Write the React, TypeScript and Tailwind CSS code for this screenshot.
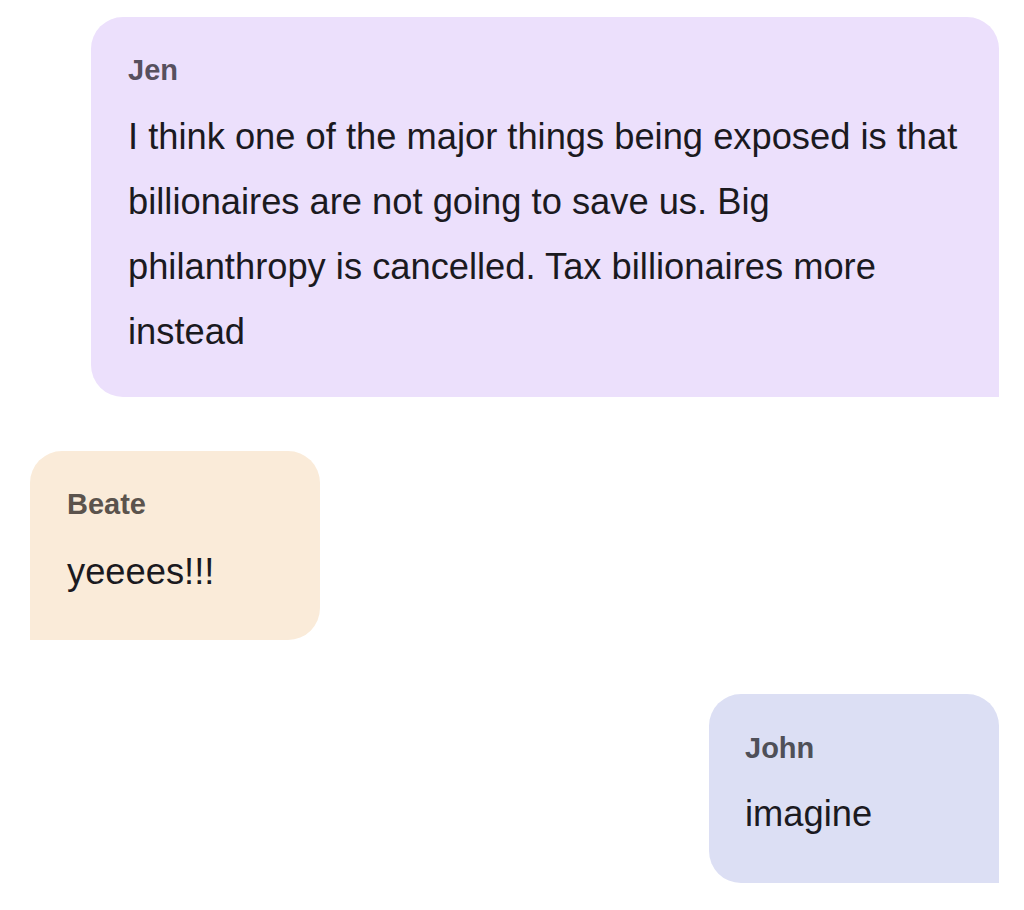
import React from "react";

export default function App() {
  return (
    <div
      className="w-[1024px] h-[910px] bg-white overflow-hidden flex flex-col pt-[17px] gap-[54px]"
      style={{ fontFamily: '"Liberation Sans", Arial, sans-serif' }}
    >
      <div className="flex justify-end pr-[25px]">
        <div className="w-[908px] bg-[#ece0fc] rounded-tl-[32px] rounded-tr-[32px] rounded-bl-[32px] pt-[35px] pb-[33px] px-[37px]">
          <div className="text-[29px] leading-[36px] font-bold text-[#57505e]">Jen</div>
          <div className="mt-[16px] text-[36.3px] leading-[65px] text-[#1b1a1f]">
            I think one of the major things being exposed is that billionaires are not going to save us. Big philanthropy is cancelled. Tax billionaires more instead
          </div>
        </div>
      </div>

      <div className="flex justify-start pl-[30px]">
        <div className="w-[290px] bg-[#faebd9] rounded-tl-[32px] rounded-tr-[32px] rounded-br-[32px] pt-[35px] pb-[36px] px-[37px]">
          <div className="text-[29px] leading-[36px] font-bold text-[#5b534d]">Beate</div>
          <div className="mt-[17px] text-[36.3px] leading-[65px] text-[#1b1a1f]">yeeees!!!</div>
        </div>
      </div>

      <div className="flex justify-end pr-[25px]">
        <div className="w-[290px] bg-[#dcdff4] rounded-tl-[32px] rounded-tr-[32px] rounded-bl-[32px] pt-[36px] pb-[37px] px-[36px]">
          <div className="text-[29px] leading-[36px] font-bold text-[#4f5058]">John</div>
          <div className="mt-[15px] text-[36.3px] leading-[65px] text-[#1b1a1f]">imagine</div>
        </div>
      </div>
    </div>
  );
}
